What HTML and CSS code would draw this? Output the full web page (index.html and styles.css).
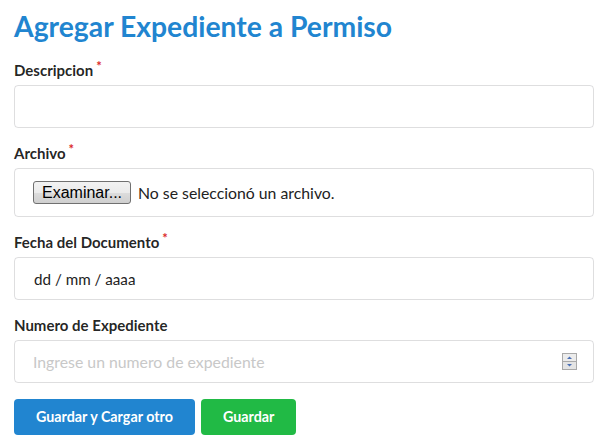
FILE: index.html
```html
<!DOCTYPE html>
<html lang="es">
<head>
<meta charset="utf-8">
<title>Agregar Expediente a Permiso</title>
<link rel="stylesheet" href="styles.css">
</head>
<body>
<div class="page">
  <h1 class="title">Agregar Expediente a Permiso</h1>
  <form class="form">
    <div class="field">
      <label class="label">Descripcion<span class="req">*</span></label>
      <div class="input"></div>
    </div>
    <div class="field">
      <label class="label">Archivo<span class="req">*</span></label>
      <div class="input file">
        <span class="file-btn">Examinar...</span>
        <span class="file-text">No se seleccionó un archivo.</span>
      </div>
    </div>
    <div class="field">
      <label class="label">Fecha del Documento<span class="req">*</span></label>
      <div class="input date">dd / mm / aaaa</div>
    </div>
    <div class="field">
      <label class="label">Numero de Expediente</label>
      <div class="input number">
        <span class="placeholder">Ingrese un numero de expediente</span>
        <svg class="spinner" width="15" height="17" viewBox="0 0 15 17">
          <rect x="0.5" y="0.5" width="14" height="16" fill="#f0f0f0" stroke="#a9a9a9"/>
          <line x1="0.5" y1="8.5" x2="14.5" y2="8.5" stroke="#a9a9a9"/>
          <rect x="1" y="1" width="13" height="7" fill="#ececec"/>
          <rect x="1" y="9" width="13" height="7" fill="#e4e4e4"/>
          <polygon points="5,6 10,6 7.5,3.5" fill="#4a6fb5"/>
          <polygon points="5,11 10,11 7.5,13.5" fill="#4a6fb5"/>
        </svg>
      </div>
    </div>
    <div class="actions">
      <button type="button" class="btn btn-blue">Guardar y Cargar otro</button>
      <button type="button" class="btn btn-green">Guardar</button>
    </div>
  </form>
</div>
</body>
</html>
```
FILE: styles.css
```css
html, body {
  margin: 0;
  padding: 0;
  background: #ffffff;
}
body {
  font-family: Lato, "Open Sans", sans-serif;
  color: rgba(0, 0, 0, 0.87);
}
.page {
  padding: 8px 21px 0 14px;
}
.title {
  margin: 0 0 17px;
  font-size: 28.3px;
  line-height: 36px;
  font-weight: 700;
  color: #2185d0;
}
.field {
  margin-bottom: 16px;
}
.label {
  display: block;
  font-size: 15px;
  line-height: 19px;
  font-weight: 700;
  margin-bottom: 5px;
  color: rgba(0, 0, 0, 0.87);
}
.req {
  color: #db2828;
  font-size: 13px;
  line-height: 1;
  position: relative;
  top: -5px;
  margin-left: 3px;
}
.input {
  box-sizing: border-box;
  height: 43px;
  border: 1px solid rgba(34, 36, 38, 0.15);
  border-radius: 4px;
  padding: 0 18px;
  font-size: 16px;
  display: flex;
  align-items: center;
  color: rgba(0, 0, 0, 0.87);
}
.file {
  height: 49px;
}
.file-btn {
  box-sizing: border-box;
  font-family: "Liberation Sans", Arial, sans-serif;
  font-size: 16px;
  height: 23px;
  width: 98px;
  display: inline-flex;
  align-items: center;
  justify-content: center;
  border: 1px solid #707070;
  border-radius: 3px;
  background: linear-gradient(#f2f2f2, #ebebeb 50%, #dddddd 50%, #cfcfcf);
  color: #000;
  margin-right: 7px;
}
.file-text {
  font-size: 15.8px;
  color: #222;
}
.date {
  padding-left: 19px;
  font-size: 15.2px;
  color: #222;
}
.number {
  justify-content: space-between;
  padding-right: 16px;
}
.placeholder {
  font-size: 15.8px;
  color: #c8c8c8;
}
.spinner {
  display: block;
}
.actions {
  display: flex;
  gap: 6px;
}
.btn {
  font-family: Lato, "Open Sans", sans-serif;
  font-size: 14.3px;
  font-weight: 700;
  line-height: 14px;
  padding: 11px 22px;
  border: none;
  border-radius: 4px;
  color: #fff;
}
.btn-blue {
  background: #2185d0;
}
.btn-green {
  background: #21ba45;
}
```
